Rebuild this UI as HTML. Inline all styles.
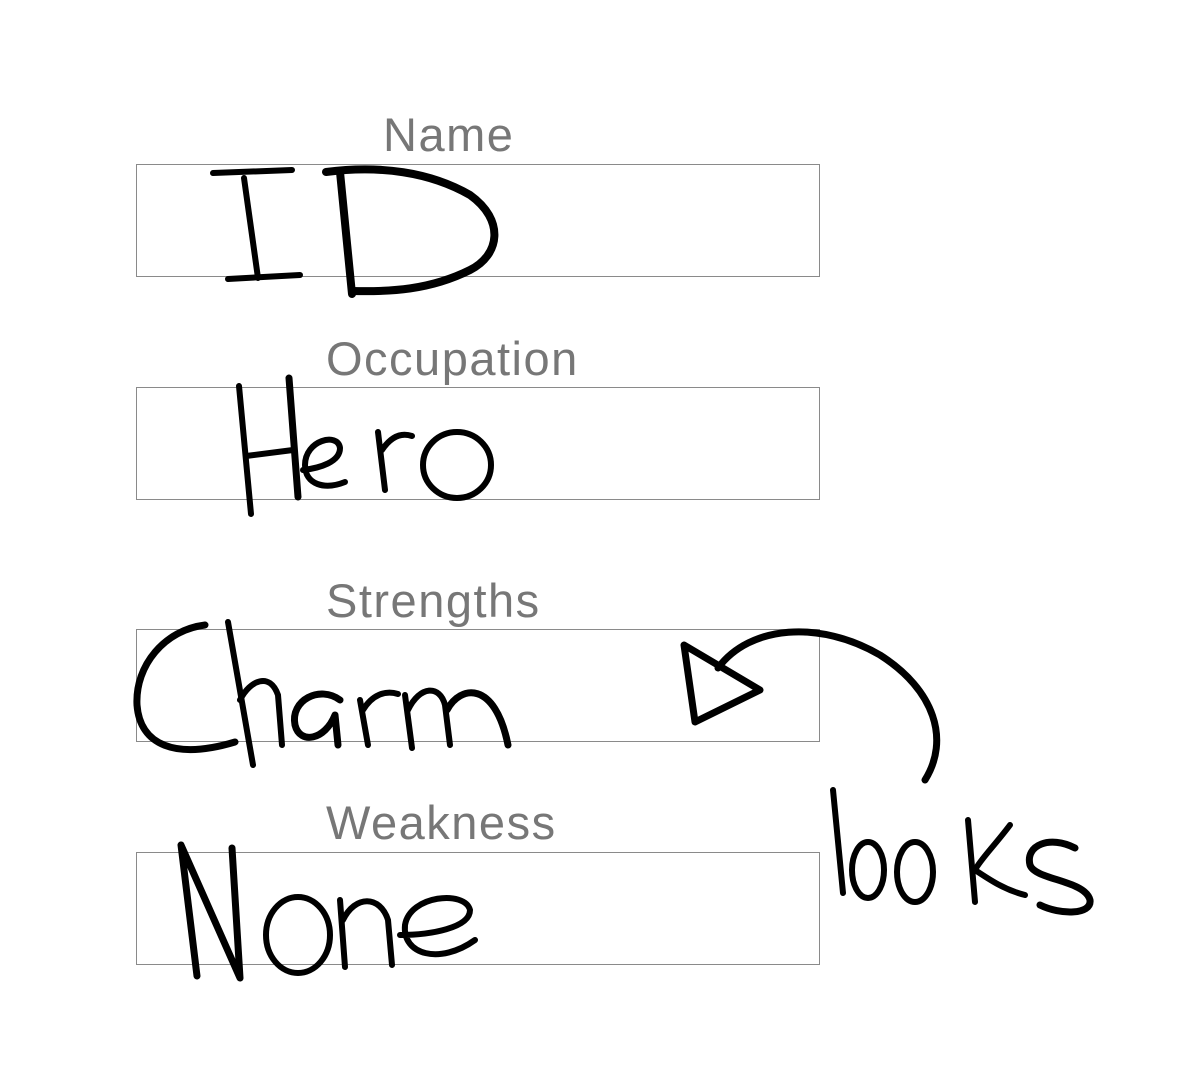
<!DOCTYPE html>
<html><head><meta charset="utf-8">
<style>
html,body{margin:0;padding:0;background:#fff;width:1187px;height:1080px;overflow:hidden;position:relative;font-family:"Liberation Sans",sans-serif}
.box{position:absolute;left:136px;width:682px;height:111px;border:1px solid #8a8a8a}
.lbl{position:absolute;color:#777;font-size:47px;letter-spacing:1.5px;line-height:1}
svg{position:absolute;left:0;top:0}
</style></head><body>
<div class="lbl" style="left:383px;top:111px">Name</div>
<div class="box" style="top:164px"></div>
<div class="lbl" style="left:326px;top:335px">Occupation</div>
<div class="box" style="top:387px"></div>
<div class="lbl" style="left:326px;top:577px">Strengths</div>
<div class="box" style="top:629px"></div>
<div class="lbl" style="left:326px;top:799px">Weakness</div>
<div class="box" style="top:852px"></div>
<svg width="1187" height="1080" fill="none" stroke="#000" stroke-width="6" stroke-linecap="round" stroke-linejoin="round">
<!-- ID -->
<path d="M213 173 L292 170"/>
<path d="M244 178 L258 278"/>
<path d="M228 279 L300 275"/>
<path d="M340 172 L352 294" stroke-width="8"/>
<path d="M326 172 C380 165 430 172 470 195 C505 220 500 255 470 270 C430 290 390 292 352 291" stroke-width="8"/>
<!-- Hero -->
<path d="M239 386 L251 514"/>
<path d="M289 378 L298 497" stroke-width="7"/>
<path d="M246 456 L293 450"/>
<path d="M303 470 C320 468 340 462 340 448 C338 432 305 440 305 465 C305 485 325 490 345 482"/>
<path d="M378 432 L385 490"/>
<path d="M382 450 C390 438 400 432 412 436"/>
<ellipse cx="457" cy="465" rx="34" ry="33"/>
<!-- Charm -->
<path d="M205 625 C165 630 135 665 137 705 C140 745 175 760 235 742" stroke-width="7"/>
<path d="M228 622 L253 765"/>
<path d="M240 700 C250 680 270 672 278 695 L282 745"/>
<path d="M340 700 C320 685 290 700 295 725 C300 745 325 740 335 715 L338 745" stroke-width="7"/>
<path d="M360 700 L368 745"/>
<path d="M363 710 C372 695 385 690 398 694"/>
<path d="M405 695 L412 748"/>
<path d="M408 710 C420 685 440 685 445 705 L450 745"/>
<path d="M447 710 C460 685 495 680 508 745" stroke-width="7"/>
<!-- arrow -->
<path d="M684 645 L695 722 L760 690 Z" stroke-width="7"/>
<path d="M718 668 C750 625 820 620 880 655 C935 690 950 740 925 780" stroke-width="7"/>
<!-- looks -->
<path d="M833 790 L843 893"/>
<ellipse cx="868" cy="870" rx="16" ry="28"/>
<ellipse cx="915" cy="872" rx="18" ry="30"/>
<path d="M968 820 L975 902"/>
<path d="M1010 825 C995 845 980 860 975 870 C990 880 1005 890 1025 895"/>
<path d="M1075 848 C1050 835 1025 845 1030 865 C1035 880 1085 880 1090 900 C1092 915 1060 915 1040 905" stroke-width="7"/>
<!-- None -->
<path d="M197 976 L181 845 L240 978 L232 848" stroke-width="7"/>
<ellipse cx="298" cy="935" rx="32" ry="38"/>
<path d="M340 900 L345 967"/>
<path d="M343 920 C355 895 380 895 388 920 L392 965"/>
<path d="M400 935 C430 935 470 928 470 910 C465 890 410 895 405 925 C402 955 440 965 475 940"/>
</svg>
</body></html>
